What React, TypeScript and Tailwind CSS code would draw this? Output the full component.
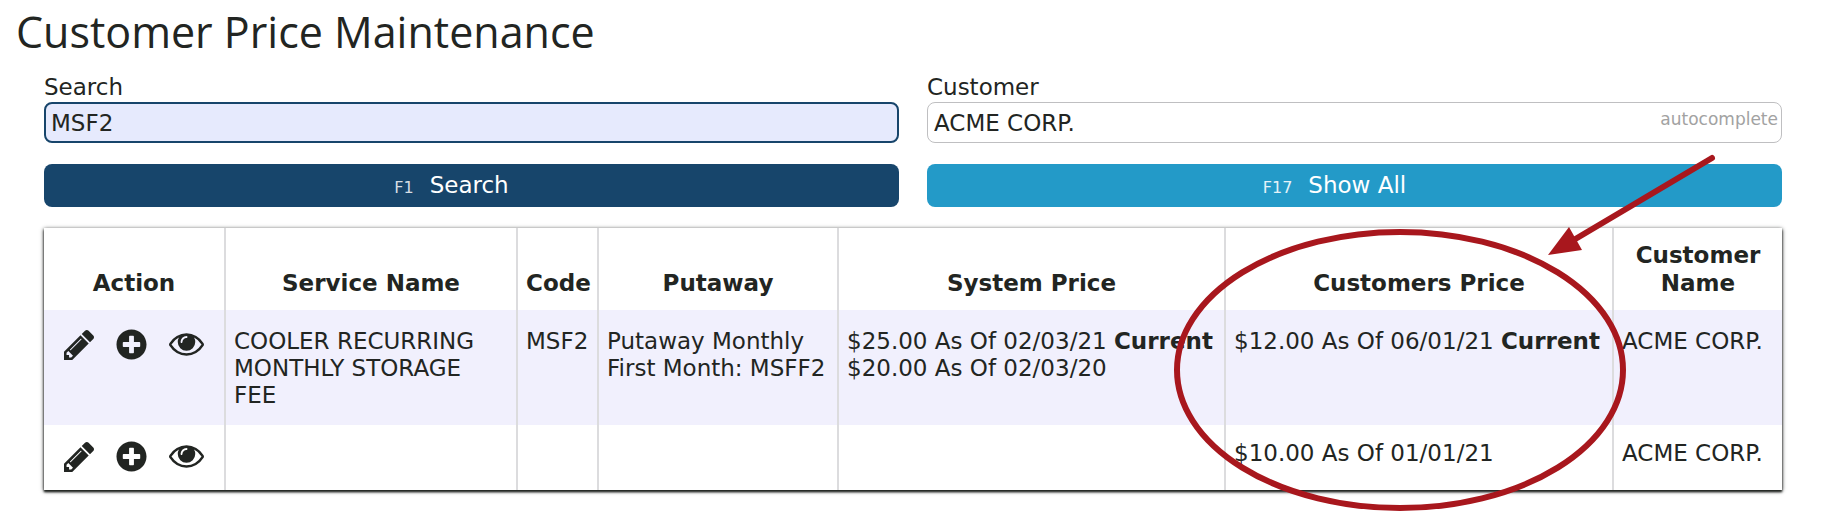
import React from "react";
import { FaPlusCircle } from "react-icons/fa";

interface Price {
  amount: string;
  date: string;
  current?: boolean;
}

interface PriceRow {
  id: number;
  service: string;
  code: string;
  putaway: string[];
  systemPrices: Price[];
  customerPrices: Price[];
  customer: string;
}

const ROWS: PriceRow[] = [
  {
    id: 1,
    service: "COOLER RECURRING MONTHLY STORAGE FEE",
    code: "MSF2",
    putaway: ["Putaway Monthly", "First Month: MSFF2"],
    systemPrices: [
      { amount: "$25.00", date: "02/03/21", current: true },
      { amount: "$20.00", date: "02/03/20" },
    ],
    customerPrices: [{ amount: "$12.00", date: "06/01/21", current: true }],
    customer: "ACME CORP.",
  },
  {
    id: 2,
    service: "",
    code: "",
    putaway: [],
    systemPrices: [],
    customerPrices: [{ amount: "$10.00", date: "01/01/21" }],
    customer: "ACME CORP.",
  },
];

function PencilIcon() {
  return (
    <svg viewBox="128 149 1515 1515" width={30} height={30} fill="currentColor" aria-hidden="true">
      <path d="M491 1536l91-91-235-235-91 91v107h128v128h107zm523-928q0-22-22-22-10 0-17 7l-542 542q-7 7-7 17 0 22 22 22 10 0 17-7l542-542q7-7 7-17zm-54-192l416 416-832 832h-416v-416l832-832zm683 96q0 53-37 90l-166 166-416-416 166-165q36-38 90-38 53 0 91 38l235 234q37 39 37 91z" />
    </svg>
  );
}

function EyeIcon() {
  return (
    <svg viewBox="0 384 1792 1152" width={35} height={23} fill="currentColor" aria-hidden="true">
      <path d="M1664 960q-152-236-381-353 61 104 61 225 0 185-131.5 316.5t-316.5 131.5-316.5-131.5-131.5-316.5q0-121 61-225-229 117-381 353 133 205 333.5 326.5t434.5 121.5 434.5-121.5 333.5-326.5zm-720-384q0-20-14-34t-34-14q-125 0-214.5 89.5t-89.5 214.5q0 20 14 34t34 14 34-14 14-34q0-86 61-147t147-61q20 0 34-14t14-34zm848 384q0 34-20 69-140 230-376.5 368.5t-499.5 138.5-499.5-139-376.5-368q-20-35-20-69t20-69q140-229 376.5-368t499.5-139 499.5 139 376.5 368q20 35 20 69z" />
    </svg>
  );
}

// Red circle round the customers price column, with an arrow pointing to it
function Callout() {
  return (
    <svg className="pointer-events-none absolute -left-14 -top-20 z-10" width={560} height={364} viewBox="1170 148 560 364" fill="none" aria-hidden="true">
      <ellipse cx="1400" cy="370" rx="223" ry="138" stroke="#a8171d" strokeWidth="6" />
      <path d="M1712 158 1572 241" stroke="#a8171d" strokeWidth="6" strokeLinecap="round" />
      <path d="M1548 255 1569 227 1582 250Z" fill="#a8171d" />
    </svg>
  );
}

function PriceList({ prices }: { prices: Price[] }) {
  return (
    <>
      {prices.map((p) => (
        <div key={p.date} className="whitespace-nowrap">
          {p.amount} As Of {p.date} {p.current && <b>Current</b>}
        </div>
      ))}
    </>
  );
}

export default function App() {
  return (
    <main className="min-h-screen pl-11 pr-[43px] bg-white text-[#222522] text-[23px] leading-[27px] font-['DejaVu_Sans',Verdana,sans-serif]">
      <h1 className="-ml-7 pb-2.5 text-[43px] leading-[64px] font-['Open_Sans','Segoe_UI',sans-serif]">Customer Price Maintenance</h1>

      <form onSubmit={(e) => e.preventDefault()} className="grid grid-cols-2 gap-x-7 gap-y-[21px]">
        <div className="flex flex-col gap-px">
          <label htmlFor="search">Search</label>
          <input id="search" defaultValue="MSF2" className="h-[41px] w-full rounded-lg border-2 border-[#17456b] bg-[#e6eafd] px-[5px] outline-none" />
        </div>
        <div className="flex flex-col gap-px">
          <label htmlFor="customer">Customer</label>
          <div className="relative">
            <input id="customer" defaultValue="ACME CORP." className="h-[41px] w-full rounded-lg border border-[#bfbfc1] bg-white px-1.5 outline-none" />
            <span className="pointer-events-none absolute right-1 top-1 text-[17px] text-[#a2a2a2]">autocomplete</span>
          </div>
        </div>
        <button type="submit" className="flex h-[43px] items-baseline justify-center gap-4 rounded-lg bg-[#17456b] pr-10 pt-2 text-white">
          <span className="text-base text-[#d5dde4]">F1</span>Search
        </button>
        <button type="button" className="flex h-[43px] items-baseline justify-center gap-4 rounded-lg bg-[#239ac8] pr-10 pt-2 text-white">
          <span className="text-base text-[#e4f2f8]">F17</span>Show All
        </button>
      </form>

      <table className="mt-[21px] w-full table-fixed border-collapse shadow-[0_2px_2px_#222522,0_1px_4px_#222522]">
        <colgroup>
          <col className="w-[181px]" />
          <col className="w-[292px]" />
          <col className="w-[81px]" />
          <col className="w-[240px]" />
          <col className="w-[387px]" />
          <col className="w-[388px]" />
          <col />
        </colgroup>
        <thead>
          <tr className="h-[82px] align-bottom leading-7 *:border-r-2 *:border-[#dcdcde] *:px-2 *:pb-[13px] *:last:border-r-0">
            <th>Action</th>
            <th>Service Name</th>
            <th>Code</th>
            <th>Putaway</th>
            <th>System Price</th>
            <th className="relative">
              Customers Price
              <Callout />
            </th>
            <th>Customer Name</th>
          </tr>
        </thead>
        <tbody>
          {ROWS.map((row) => (
            <tr key={row.id} className="align-top odd:bg-[#f1f0fd] *:border-r-2 *:border-[#dcdcde] *:px-2 *:pb-4 *:pt-[18px] *:last:border-r-0 even:h-[65px] even:*:pt-[15px] even:*:pb-0">
              <td>
                <div className="flex items-center gap-[22px] pl-3 pt-px">
                  <button type="button" aria-label="Edit"><PencilIcon /></button>
                  <button type="button" aria-label="Add"><FaPlusCircle size={31} /></button>
                  <button type="button" aria-label="View"><EyeIcon /></button>
                </div>
              </td>
              <td>{row.service}</td>
              <td>{row.code}</td>
              <td className="whitespace-nowrap">
                {row.putaway.map((line) => <div key={line}>{line}</div>)}
              </td>
              <td><PriceList prices={row.systemPrices} /></td>
              <td><PriceList prices={row.customerPrices} /></td>
              <td className="whitespace-nowrap">{row.customer}</td>
            </tr>
          ))}
        </tbody>
      </table>
    </main>
  );
}
